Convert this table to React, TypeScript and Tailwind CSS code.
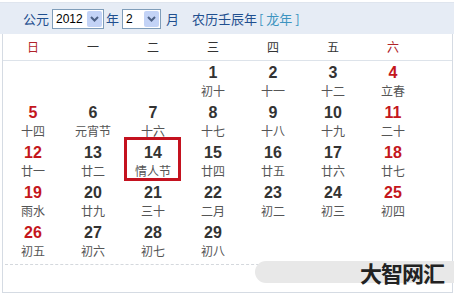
import React from "react"

const font = { fontFamily: '"Noto Sans CJK SC", "Noto Sans", sans-serif' }

type Day = { d: number; l: string }

const days: (Day | null)[] = [
  null, null, null,
  { d: 1, l: "初十" }, { d: 2, l: "十一" }, { d: 3, l: "十二" }, { d: 4, l: "立春" },
  { d: 5, l: "十四" }, { d: 6, l: "元宵节" }, { d: 7, l: "十六" }, { d: 8, l: "十七" }, { d: 9, l: "十八" }, { d: 10, l: "十九" }, { d: 11, l: "二十" },
  { d: 12, l: "廿一" }, { d: 13, l: "廿二" }, { d: 14, l: "情人节" }, { d: 15, l: "廿四" }, { d: 16, l: "廿五" }, { d: 17, l: "廿六" }, { d: 18, l: "廿七" },
  { d: 19, l: "雨水" }, { d: 20, l: "廿九" }, { d: 21, l: "三十" }, { d: 22, l: "二月" }, { d: 23, l: "初二" }, { d: 24, l: "初三" }, { d: 25, l: "初四" },
  { d: 26, l: "初五" }, { d: 27, l: "初六" }, { d: 28, l: "初七" }, { d: 29, l: "初八" },
]

const weekdays = ["日", "一", "二", "三", "四", "五", "六"]

function FakeSelect({ value, width }: { value: string; width: string }) {
  return (
    <div className={`flex h-[20px] items-stretch border border-[#7f9db9] bg-white ${width}`}>
      <span className="flex-1 pl-[3px] text-[12px] leading-[18px] text-black" style={{ fontFamily: '"Liberation Sans", sans-serif' }}>
        {value}
      </span>
      <span className="m-px flex w-[15px] items-center justify-center rounded-[2px] bg-[#c3d3f6]">
        <svg width="9" height="6" viewBox="0 0 9 6">
          <path d="M1 1 L4.5 4.5 L8 1" fill="none" stroke="#4d6185" strokeWidth="2" />
        </svg>
      </span>
    </div>
  )
}

export default function App() {
  return (
    <div className="relative h-[296px] w-[454px] overflow-hidden bg-white" style={font}>
      <div className="mt-[2px] flex h-[32px] items-center border-t border-[#dfe5ee] bg-[#e6ecf5] pl-[23px] text-[13px] text-[#1f4f8f]">
        <span>公元</span>
        <span className="ml-[3px]"><FakeSelect value="2012" width="w-[52px]" /></span>
        <span className="ml-[2px]">年</span>
        <span className="ml-[3px]"><FakeSelect value="2" width="w-[39px]" /></span>
        <span className="ml-[5px]">月</span>
        <span className="ml-[13px]">农历壬辰年</span>
        <span className="ml-[2px] text-[#3d94c0]">[ 龙年 ]</span>
      </div>

      <div className="ml-[2px] w-[451px] border-x border-b border-[#d5dbe3]">
        <div className="grid h-[27px] grid-cols-[repeat(7,60px)] items-center border-b border-[#dde3ea] text-[12px]">
          {weekdays.map((w, i) => (
            <div key={w} className={`text-center ${i === 0 || i === 6 ? "text-[#b0232a]" : "text-[#333]"}`}>
              {w}
            </div>
          ))}
        </div>

        <div className="grid grid-cols-[repeat(7,60px)] grid-rows-[repeat(5,40px)]">
          {days.map((day, i) => {
            if (!day) return <div key={`e${i}`} />
            const weekend = i % 7 === 0 || i % 7 === 6
            return (
              <div key={day.d} className="relative flex flex-col items-center pt-[3px]">
                {day.d === 14 && (
                  <div className="absolute -top-[4px] bottom-0 left-[1px] right-[2px] border-[3px] border-[#c4121f]" />
                )}
                <span
                  className={`text-[16px] font-bold leading-[18px] ${weekend ? "text-[#c4161c]" : "text-[#333]"}`}
                  style={{ fontFamily: '"Liberation Sans", Arial, sans-serif' }}
                >
                  {day.d}
                </span>
                <span className="mt-[1px] text-[12px] leading-[15px] text-[#555]">{day.l}</span>
              </div>
            )
          })}
        </div>

        <div className="mx-[2px] mt-[3px] h-[28px] border-t border-dashed border-[#d4d8dd]" />
      </div>

      <div className="absolute left-[255px] top-[261px] flex h-[22px] w-[210px] items-center justify-end rounded-l-[11px] bg-[#e8e8e8] pr-[21px]">
        <span className="text-[22px] font-bold leading-none tracking-[-1px] text-[#222]">大智网汇</span>
      </div>
    </div>
  )
}
